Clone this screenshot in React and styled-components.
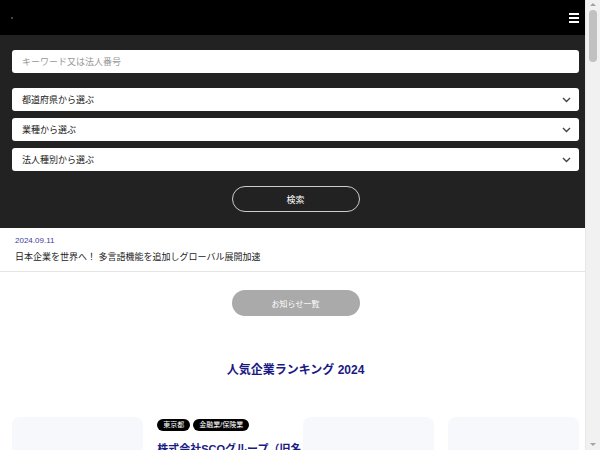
import React from "react";
import styled, { createGlobalStyle } from "styled-components";

const GlobalStyle = createGlobalStyle`
  html, body {
    margin: 0;
    padding: 0;
    background: #fff;
    font-family: "Liberation Sans", "Noto Sans CJK JP", sans-serif;
  }
  body { margin-right: 15px; }
  * { box-sizing: border-box; }
`;

// the reference shows a classic scrollbar on the right edge
const ScrollTrack = styled.div`
  position: fixed;
  top: 0;
  right: 0;
  width: 15px;
  height: 100vh;
  background: #f1f1f1;
  border-left: 1px solid #e8e8e8;
`;

const ScrollThumb = styled.div`
  position: absolute;
  top: 10px;
  left: 3px;
  width: 8px;
  height: 52px;
  border-radius: 4px;
  background: #c1c1c1;
`;

const ScrollArrow = styled.div`
  position: absolute;
  left: 4px;
  width: 0;
  height: 0;
  border-left: 3px solid transparent;
  border-right: 3px solid transparent;
  ${(p) =>
    p.$down
      ? "bottom: 4px; border-top: 3px solid #a3a3a3;"
      : "top: 3px; border-bottom: 3px solid #a3a3a3;"}
`;

const Header = styled.header`
  height: 35px;
  background: #000;
  display: flex;
  align-items: center;
  justify-content: space-between;
  padding: 0 6px 0 11px;
`;

const LogoDot = styled.span`
  width: 2px;
  height: 2px;
  background: #444;
`;

const MenuButton = styled.button`
  border: none;
  background: transparent;
  padding: 0;
  width: 10px;
  display: flex;
  flex-direction: column;
  gap: 2px;
  cursor: pointer;
  span {
    display: block;
    height: 2px;
    background: #fff;
  }
`;

const SearchSection = styled.section`
  background: #222;
  padding: 15px 6px 16px 12px;
  display: flex;
  flex-direction: column;
`;

const KeywordInput = styled.input`
  height: 23px;
  border: none;
  border-radius: 3px;
  padding: 0 10px;
  font-size: 9px;
  font-family: inherit;
  margin-bottom: 15px;
  &::placeholder { color: #999; }
`;

const SelectList = styled.div`
  display: flex;
  flex-direction: column;
  gap: 7px;
`;

const SelectBox = styled.div`
  height: 23px;
  background: #fff;
  border-radius: 3px;
  padding: 0 8px 0 10px;
  display: flex;
  align-items: center;
  justify-content: space-between;
  font-size: 9px;
  color: #222;
`;

const SearchButton = styled.button`
  align-self: center;
  margin-top: 15px;
  width: 128px;
  height: 26px;
  border-radius: 13px;
  border: 1px solid #ccc;
  background: transparent;
  color: #fff;
  font-size: 9px;
  font-family: inherit;
`;

const NewsItem = styled.div`
  padding: 8px 15px 8px;
  border-bottom: 1px solid #e4e4e4;
  display: flex;
  flex-direction: column;
  gap: 5px;
`;

const NewsDate = styled.div`
  font-size: 8px;
  color: #3f3c9c;
`;

const NewsTitle = styled.div`
  font-size: 9px;
  color: #222;
`;

const Main = styled.main`
  padding: 0 6px 40px 12px;
`;

const MoreWrap = styled.div`
  display: flex;
  justify-content: center;
  padding: 18px 0 0;
`;

const MoreButton = styled.button`
  width: 128px;
  height: 26px;
  border-radius: 13px;
  border: none;
  background: #aaa;
  color: #fff;
  font-size: 8px;
  font-family: inherit;
`;

const SectionTitle = styled.h2`
  margin: 44px 0 0;
  text-align: center;
  font-size: 12px;
  font-weight: bold;
  color: #1b1a84;
`;

const CardGrid = styled.div`
  display: grid;
  grid-template-columns: repeat(4, 1fr);
  gap: 14px;
  padding-top: 40px;
`;

const Card = styled.div`
  display: flex;
  flex-direction: column;
  min-width: 0;
`;

const CardImage = styled.div`
  height: 100px;
  border-radius: 8px;
  background: #f7f8fb;
`;

const TagRow = styled.div`
  display: flex;
  gap: 3px;
  margin-top: 2px;
`;

const Tag = styled.span`
  background: #000;
  color: #fff;
  font-size: 7px;
  border-radius: 6px;
  padding: 2px 6px;
  line-height: 8px;
`;

const CompanyName = styled.div`
  margin-top: 10px;
  font-size: 11px;
  font-weight: bold;
  color: #1b1a84;
  line-height: 16px;
  white-space: nowrap;
`;

const Chevron = () => (
  <svg width="9" height="6" viewBox="0 0 9 6">
    <path d="M1 1l3.5 3.5L8 1" fill="none" stroke="#444" strokeWidth="1.4" />
  </svg>
);

const selects = ["都道府県から選ぶ", "業種から選ぶ", "法人種別から選ぶ"];

export default function App() {
  return (
    <>
      <GlobalStyle />
      <Header>
        <LogoDot />
        <MenuButton aria-label="menu">
          <span />
          <span />
          <span />
        </MenuButton>
      </Header>
      <SearchSection>
        <KeywordInput placeholder="キーワード又は法人番号" />
        <SelectList>
          {selects.map((s) => (
            <SelectBox key={s}>
              {s}
              <Chevron />
            </SelectBox>
          ))}
        </SelectList>
        <SearchButton>検索</SearchButton>
      </SearchSection>
      <NewsItem>
        <NewsDate>2024.09.11</NewsDate>
        <NewsTitle>日本企業を世界へ！ 多言語機能を追加しグローバル展開加速</NewsTitle>
      </NewsItem>
      <Main>
        <MoreWrap>
          <MoreButton>お知らせ一覧</MoreButton>
        </MoreWrap>
        <SectionTitle>人気企業ランキング 2024</SectionTitle>
        <CardGrid>
          <Card>
            <CardImage />
          </Card>
          <Card>
            <TagRow>
              <Tag>東京都</Tag>
              <Tag>金融業/保険業</Tag>
            </TagRow>
            <CompanyName>株式会社SCOグループ（旧名</CompanyName>
          </Card>
          <Card>
            <CardImage />
          </Card>
          <Card>
            <CardImage />
          </Card>
        </CardGrid>
      </Main>
      <ScrollTrack>
        <ScrollArrow />
        <ScrollThumb />
        <ScrollArrow $down />
      </ScrollTrack>
    </>
  );
}
